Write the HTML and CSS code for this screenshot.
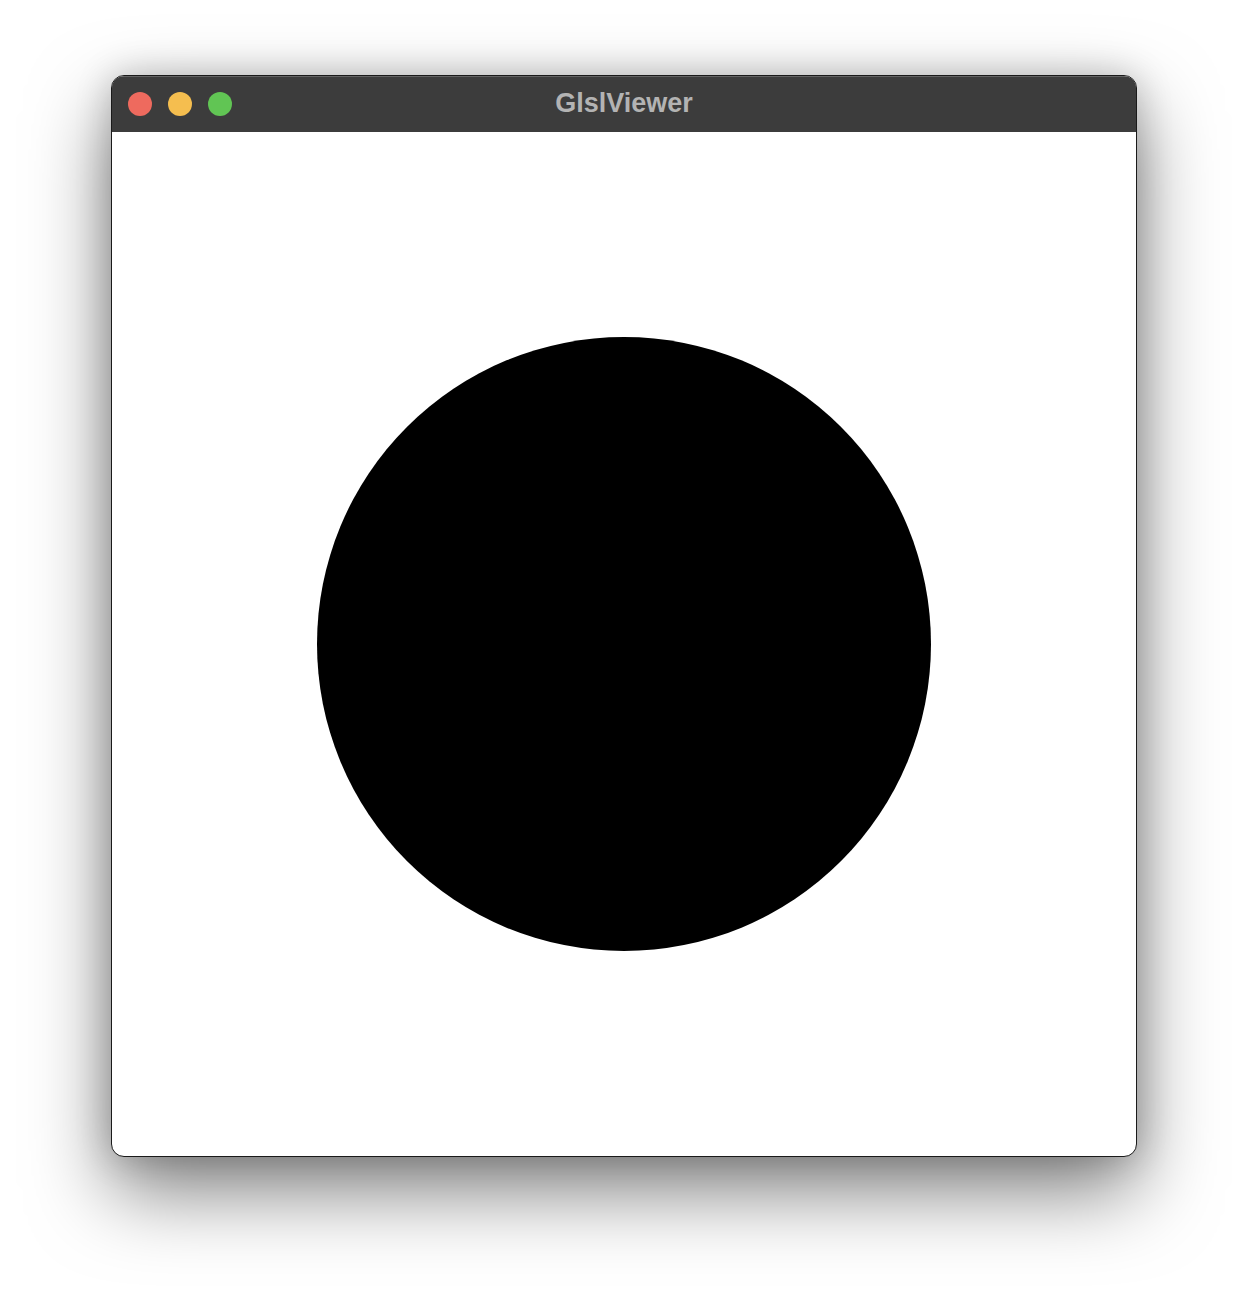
FILE: index.html
```html
<!DOCTYPE html>
<html>
<head>
<meta charset="utf-8">
<link rel="stylesheet" href="styles.css">
</head>
<body>
<div class="window">
  <div class="titlebar">
    <div class="lights">
      <span class="light red"></span>
      <span class="light yellow"></span>
      <span class="light green"></span>
    </div>
    <div class="title">GlslViewer</div>
  </div>
  <div class="canvas">
    <div class="disc"></div>
  </div>
</div>
</body>
</html>
```
FILE: styles.css
```css
html, body {
  margin: 0;
  padding: 0;
  background: #ffffff;
}
body {
  display: flex;
  justify-content: center;
  padding-top: 75px;
  height: 1304px;
  box-sizing: border-box;
  overflow: hidden;
}
.window {
  width: 1024px;
  border: 1px solid #1a1a1a;
  border-radius: 13px;
  overflow: hidden;
  background: #ffffff;
  box-shadow: 0 34px 80px rgba(0, 0, 0, 0.5), 0 0 36px rgba(0, 0, 0, 0.2);
  align-self: flex-start;
}
.titlebar {
  position: relative;
  height: 56px;
  background: #3c3c3c;
  box-shadow: inset 0 1px 0 rgba(255, 255, 255, 0.2);
  display: flex;
  align-items: center;
  justify-content: center;
}
.lights {
  position: absolute;
  left: 16px;
  top: 16px;
  display: flex;
  gap: 16px;
}
.light {
  width: 24px;
  height: 24px;
  border-radius: 50%;
  display: block;
}
.red { background: #ee6a5e; }
.yellow { background: #f5be4f; }
.green { background: #61c554; }
.title {
  font-family: "Liberation Sans", Arial, sans-serif;
  font-weight: bold;
  font-size: 27px;
  color: #b3b3b3;
  margin-top: -2px;
}
.canvas {
  height: 1024px;
  display: flex;
  align-items: center;
  justify-content: center;
}
.disc {
  width: 614px;
  height: 614px;
  border-radius: 50%;
  background: #000000;
}
```
